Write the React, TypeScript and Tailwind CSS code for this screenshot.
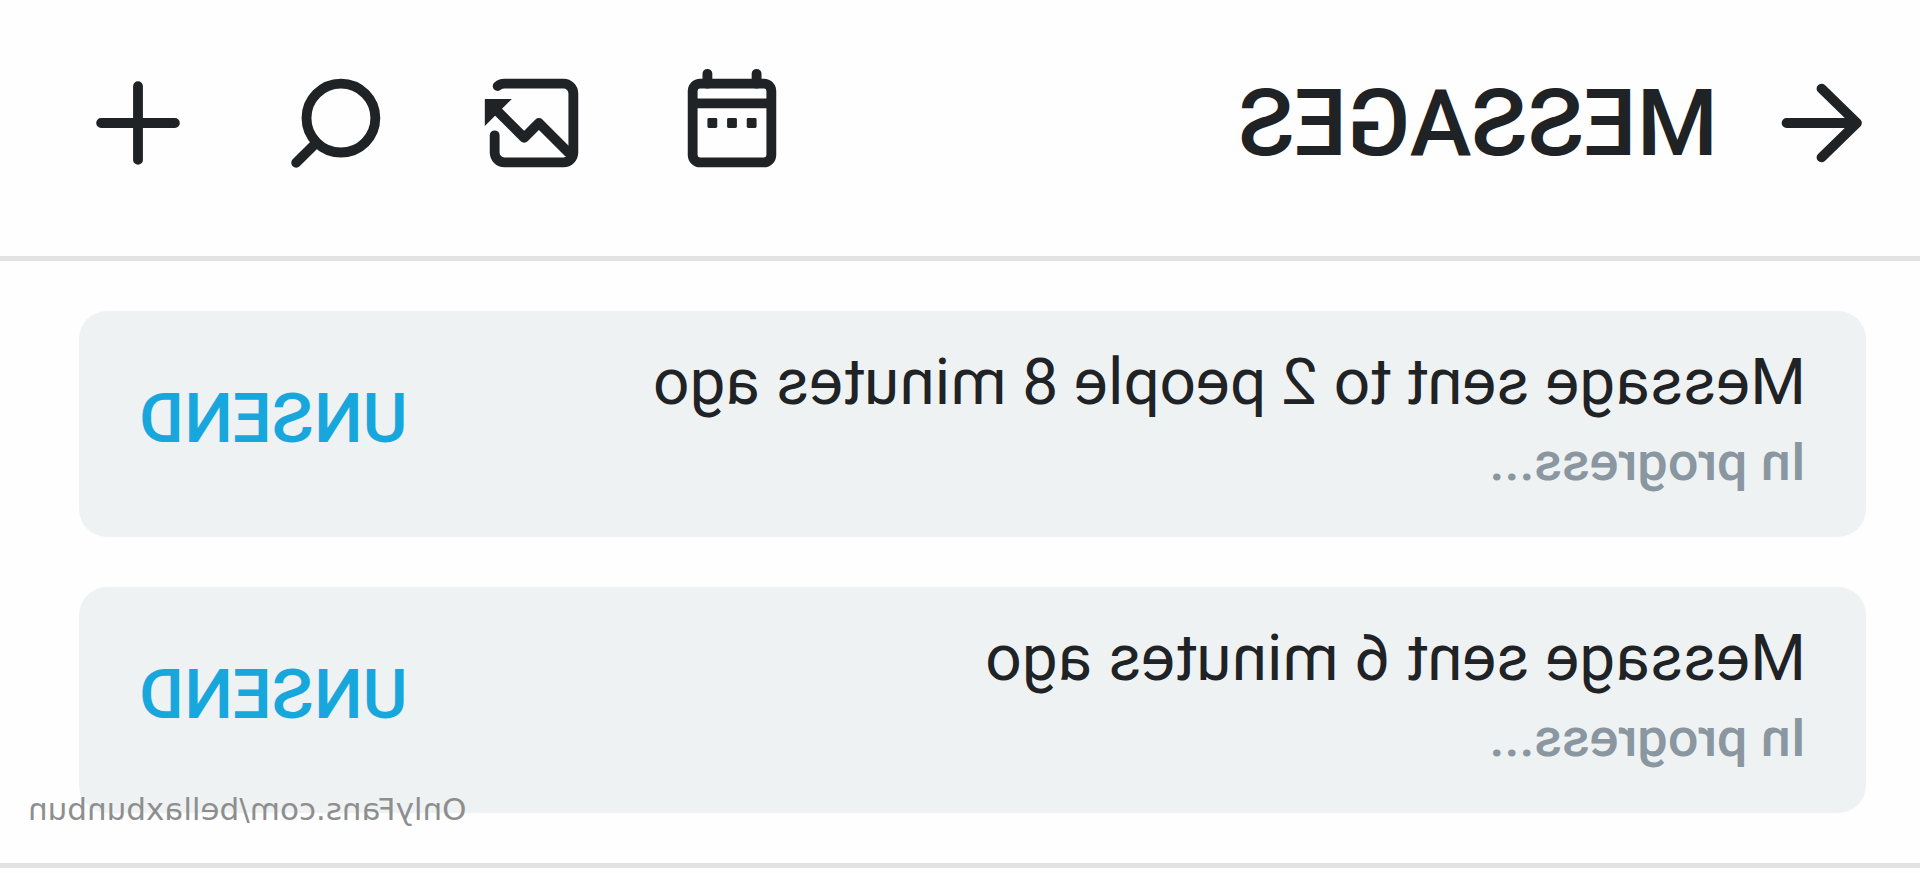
import React from 'react'

const messages = [
  { id: 1, title: 'Message sent to 2 people 8 minutes ago', status: 'In progress...' },
  { id: 2, title: 'Message sent 6 minutes ago', status: 'In progress...' },
]

function Icon({ children }: { children: React.ReactNode }) {
  return (
    <svg
      viewBox="0 0 24 24"
      className="size-[118px]"
      fill="none"
      stroke="currentColor"
      strokeWidth="2"
      strokeLinecap="round"
      strokeLinejoin="round"
      aria-hidden="true"
    >
      {children}
    </svg>
  )
}

function Header() {
  return (
    <header className="flex items-center justify-between border-b-5 border-[#e2e2e2] pt-16 pb-[74px] pl-10 pr-[79px]">
      <div className="flex items-center gap-11">
        <a href="#" aria-label="Back">
          <Icon>
            <path d="M19 12H4.7M11.9 5l-7.2 7 7.2 7" />
          </Icon>
        </a>
        <h1 className="text-[93px] leading-none font-medium">MESSAGES</h1>
      </div>
      <div className="flex items-center gap-20">
        <button type="button" aria-label="Calendar">
          <Icon>
            <rect x="4" y="4" width="16" height="16" rx="1.5" />
            <path d="M4 8h16" strokeLinecap="butt" />
            <path d="M7 2v2M17 2v2" />
            <g fill="currentColor" stroke="none">
              <rect x="7" y="11" width="2" height="2" rx="0.3" />
              <rect x="11" y="11" width="2" height="2" rx="0.3" />
              <rect x="15" y="11" width="2" height="2" rx="0.3" />
            </g>
          </Icon>
        </button>
        <button type="button" aria-label="Statistics">
          <Icon>
            <path d="M19.4 4.5Q18.9 4 18 4H6a2 2 0 0 0-2 2v12a2 2 0 0 0 2 2h12a2 2 0 0 0 2-2v-3.5" />
            <path d="M5 18l6-6 3 3 6-6" />
            <path d="M22 7.1v5.5l-5.5-5.5z" fill="currentColor" stroke="none" />
          </Icon>
        </button>
        <button type="button" aria-label="Search">
          <Icon>
            <circle cx="11" cy="11" r="7" />
            <path d="M16 16l4.1 4.1" />
          </Icon>
        </button>
        <button type="button" aria-label="New message">
          <Icon>
            <path d="M4.5 12h15M12 4.5v15" />
          </Icon>
        </button>
      </div>
    </header>
  )
}

export default function App() {
  return (
    <div className="min-h-screen -scale-x-100 bg-[#fefefe] font-['Roboto',sans-serif] text-[#1f2326]">
      <Header />
      <main className="relative border-b-5 border-[#e2e2e2] py-[50px] pl-[54px] pr-[79px]">
        <ul className="flex flex-col gap-[50px]">
          {messages.map((message) => (
            <li key={message.id} className="flex items-center justify-between rounded-[28px] bg-[#eef2f3] px-[60px] pt-8 pb-9">
              <div>
                <p className="text-[64px] leading-[80px]">{message.title}</p>
                <p className="text-[54px] leading-[78px] font-medium text-[#8a96a0]">{message.status}</p>
              </div>
              <button type="button" className="pb-2 text-[69px] leading-none font-medium text-[#18a7dc]">
                UNSEND
              </button>
            </li>
          ))}
        </ul>
        <a href="#" className="absolute right-7 bottom-9 font-['DejaVu_Sans',sans-serif] text-[31px] leading-9 text-[#8e8e8e]">
          OnlyFans.com/bellaxbunbun
        </a>
      </main>
    </div>
  )
}
